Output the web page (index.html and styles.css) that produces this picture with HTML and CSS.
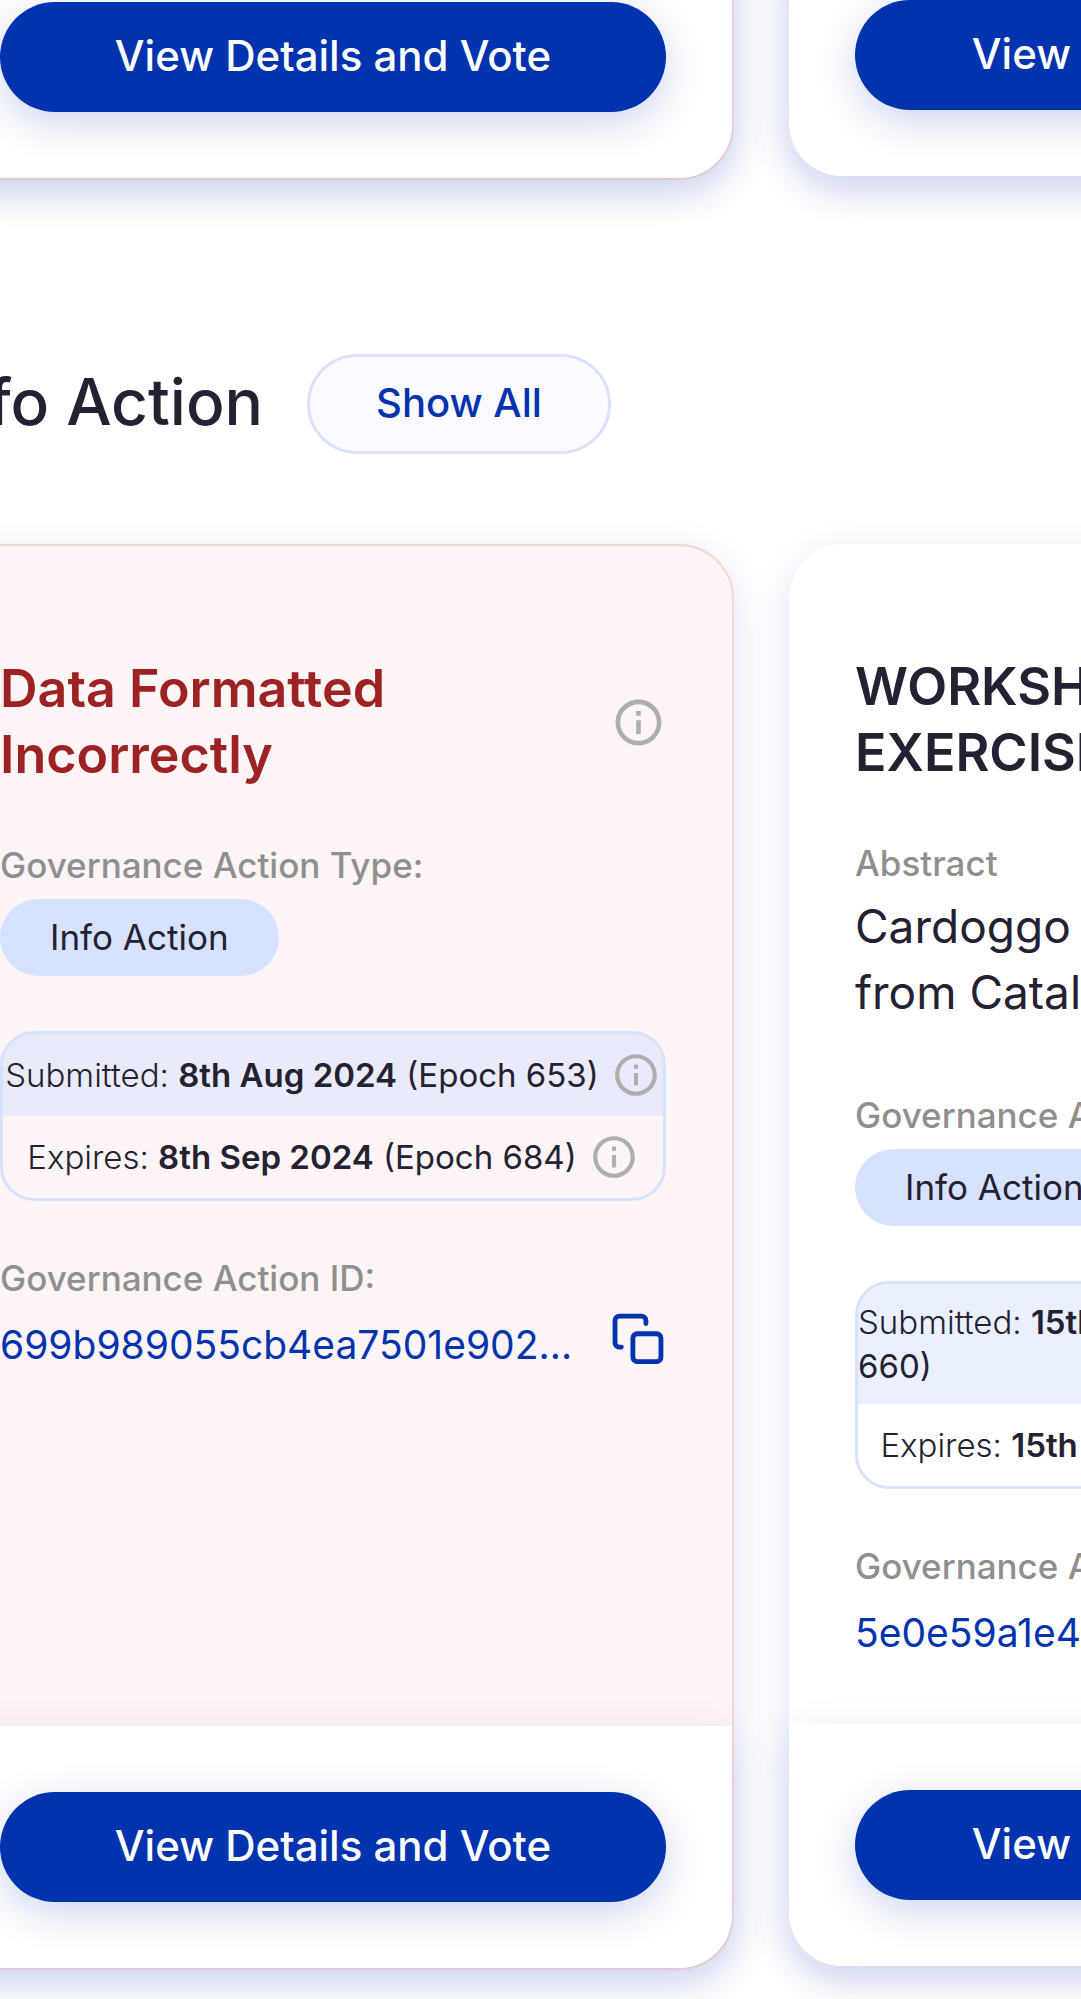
FILE: index.html
```html
<!DOCTYPE html>
<html lang="en">
<head>
<meta charset="utf-8">
<meta name="viewport" content="width=device-width, initial-scale=1">
<title>Governance Actions</title>
<link rel="stylesheet" href="styles.css">
</head>
<body>
<svg class="sprite" aria-hidden="true">
  <symbol id="info" viewBox="0 0 24 24">
    <path d="M11 7h2v2h-2zm0 4h2v6h-2zm1-9C6.480 2 2 6.480 2 12s4.480 10 10 10 10-4.480 10-10S17.520 2 12 2m0 18c-4.410 0-8-3.590-8-8s3.590-8 8-8 8 3.590 8 8-3.590 8-8 8"/>
  </symbol>
  <symbol id="copy" viewBox="0 1 24 24">
    <path d="M5.500 15.500H4.700a1.800 1.800 0 0 1-1.800-1.800V4.500a1.800 1.800 0 0 1 1.800-1.800h9.200a1.800 1.800 0 0 1 1.800 1.800v1.300" />
    <rect x="10.300" y="10" width="11.600" height="11.500" rx="1.800"/>
  </symbol>
</svg>
<main class="page">
  <section class="track track-first">
    <article class="card card-error">
      <footer class="card-footer"><button class="btn-primary" type="button">View Details and Vote</button></footer>
    </article>
    <article class="card">
      <footer class="card-footer"><button class="btn-primary" type="button">View Details and Vote</button></footer>
    </article>
  </section>

  <header class="section-head">
    <h2 class="section-title">Info Action</h2>
    <button class="btn-outline" type="button">Show All</button>
  </header>

  <section class="track">
    <article class="card card-error">
      <div class="card-body">
        <div class="title-row">
          <h3 class="title">Data Formatted Incorrectly</h3>
          <svg class="icon-info icon-info-lg"><use href="#info"/></svg>
        </div>
        <div class="field">
          <p class="label">Governance Action Type:</p>
          <span class="chip">Info Action</span>
        </div>
        <div class="dates">
          <div class="date date-submitted">
            <p class="date-text">Submitted: <b>8th Aug 2024</b> <span class="epoch">(Epoch 653)</span></p>
            <svg class="icon-info"><use href="#info"/></svg>
          </div>
          <div class="date">
            <p class="date-text">Expires: <b>8th Sep 2024</b> <span class="epoch">(Epoch 684)</span></p>
            <svg class="icon-info"><use href="#info"/></svg>
          </div>
        </div>
        <div class="field">
          <p class="label">Governance Action ID:</p>
          <div class="id-row">
            <span class="id-text">699b989055cb4ea7501e902…</span>
            <button class="btn-copy" type="button" aria-label="Copy ID"><svg class="icon-copy"><use href="#copy"/></svg></button>
          </div>
        </div>
      </div>
      <footer class="card-footer"><button class="btn-primary" type="button">View Details and Vote</button></footer>
    </article>

    <article class="card">
      <div class="card-body">
        <div class="title-row">
          <h3 class="title">WORKSHOP<br>EXERCISE</h3>
        </div>
        <div class="field field-abstract">
          <p class="label">Abstract</p>
          <p class="abstract">Cardoggo<br>from Catalyst</p>
        </div>
        <div class="field">
          <p class="label">Governance Action Type:</p>
          <span class="chip">Info Action</span>
        </div>
        <div class="dates">
          <div class="date date-submitted">
            <p class="date-text">Submitted: <b>15th Sep 2024</b> <span class="epoch">(Epoch 660)</span></p>
            <svg class="icon-info"><use href="#info"/></svg>
          </div>
          <div class="date">
            <p class="date-text">Expires: <b>15th Oct 2024</b> <span class="epoch">(Epoch 690)</span></p>
            <svg class="icon-info"><use href="#info"/></svg>
          </div>
        </div>
        <div class="field">
          <p class="label">Governance Action ID:</p>
          <div class="id-row">
            <span class="id-text">5e0e59a1e4</span>
            <button class="btn-copy" type="button" aria-label="Copy ID"><svg class="icon-copy"><use href="#copy"/></svg></button>
          </div>
        </div>
      </div>
      <footer class="card-footer"><button class="btn-primary" type="button">View Details and Vote</button></footer>
    </article>
  </section>
</main>
</body>
</html>
```
FILE: styles.css
```css
* { box-sizing: border-box; }

body {
  margin: 0;
  background: #fff;
  color: #242232;
  font-family: Inter, sans-serif;
  overflow: hidden;
}

h2, h3, p { margin: 0; }
button { font-family: inherit; cursor: pointer; }

.sprite { display: none; }

.page { overflow: hidden; padding-bottom: 66px; }

/* Horizontally scrolled strips of cards */
.track {
  display: flex;
  align-items: flex-start;
  gap: 55px;
  margin-left: -68px;
}
.track-first { margin-top: -66px; }

.card {
  flex: 0 0 802px;
  border-radius: 55px;
  background: #fff;
  box-shadow: 0 11px 41px #dde3f5;
}
.card-error {
  background: #fdf4f5;
  border: 2px solid #f6d5d5;
}

.card-body {
  display: flex;
  flex-direction: column;
  gap: 55px;
  min-height: 1180px;
  padding: 110px 66px 56px;
}

.card-footer {
  padding: 66px;
  border-radius: 0 0 53px 53px;
  background: #fff;
  box-shadow: 0 11px 41px rgba(30, 60, 170, .12);
}

.btn-primary {
  display: block;
  width: 100%;
  height: 110px;
  padding: 0 0 4px;
  border: 0;
  border-radius: 55px;
  background: #0033ad;
  box-shadow: 0 11px 41px rgba(0, 51, 173, .2);
  color: #fff;
  font-size: 42px;
  font-weight: 500;
}

.section-head {
  display: flex;
  align-items: center;
  gap: 44px;
  margin: 174px 0 90px -68px;
}
.section-title {
  padding-bottom: 4px;
  font-size: 64px;
  line-height: 90px;
  font-weight: 500;
}
.btn-outline {
  height: 100px;
  padding: 0 66px 4px;
  border: 3px solid #d6e2ff;
  border-radius: 50px;
  background: #fbfaff;
  color: #0033ad;
  font-size: 40px;
  font-weight: 500;
}

.title-row {
  display: flex;
  align-items: center;
  justify-content: space-between;
}
.title {
  font-size: 52px;
  line-height: 66px;
  font-weight: 600;
}
.card-error .title {
  max-width: 500px;
  color: #9c2224;
}

.icon-info {
  flex: none;
  width: 50px;
  height: 50px;
  fill: #adaead;
}
.icon-info-lg { width: 55px; height: 55px; }

.label {
  margin-bottom: 12px;
  color: #8e908e;
  font-size: 35px;
  line-height: 44px;
  font-weight: 500;
}
.chip {
  display: block;
  width: fit-content;
  padding: 0 50px;
  border-radius: 39px;
  background: #d6e2ff;
  font-size: 35px;
  line-height: 77px;
}
.field-abstract {
  padding-bottom: 13px;
}
.field-abstract .label { margin-bottom: 8px; }
.abstract {
  font-size: 46px;
  line-height: 66px;
}

.dates {
  border: 3px solid #d6e2ff;
  border-radius: 34px;
  overflow: hidden;
}
.date {
  display: flex;
  align-items: center;
  justify-content: center;
  gap: 12px;
  padding: 16px 0;
}
.date-submitted { background: rgba(214, 226, 255, .5); }
.date-text {
  font-size: 33px;
  line-height: 44px;
  font-weight: 300;
}
.date-text b { font-weight: 600; }
.epoch { font-weight: 400; }

.id-row {
  display: flex;
  align-items: flex-start;
  justify-content: space-between;
}
.id-text {
  color: #0033ad;
  font-size: 39px;
  line-height: 66px;
}
.btn-copy {
  padding: 0;
  border: 0;
  background: none;
}
.icon-copy {
  display: block;
  width: 58px;
  height: 58px;
  fill: none;
  stroke: #0033ad;
  stroke-width: 2;
  stroke-linecap: round;
}
```
